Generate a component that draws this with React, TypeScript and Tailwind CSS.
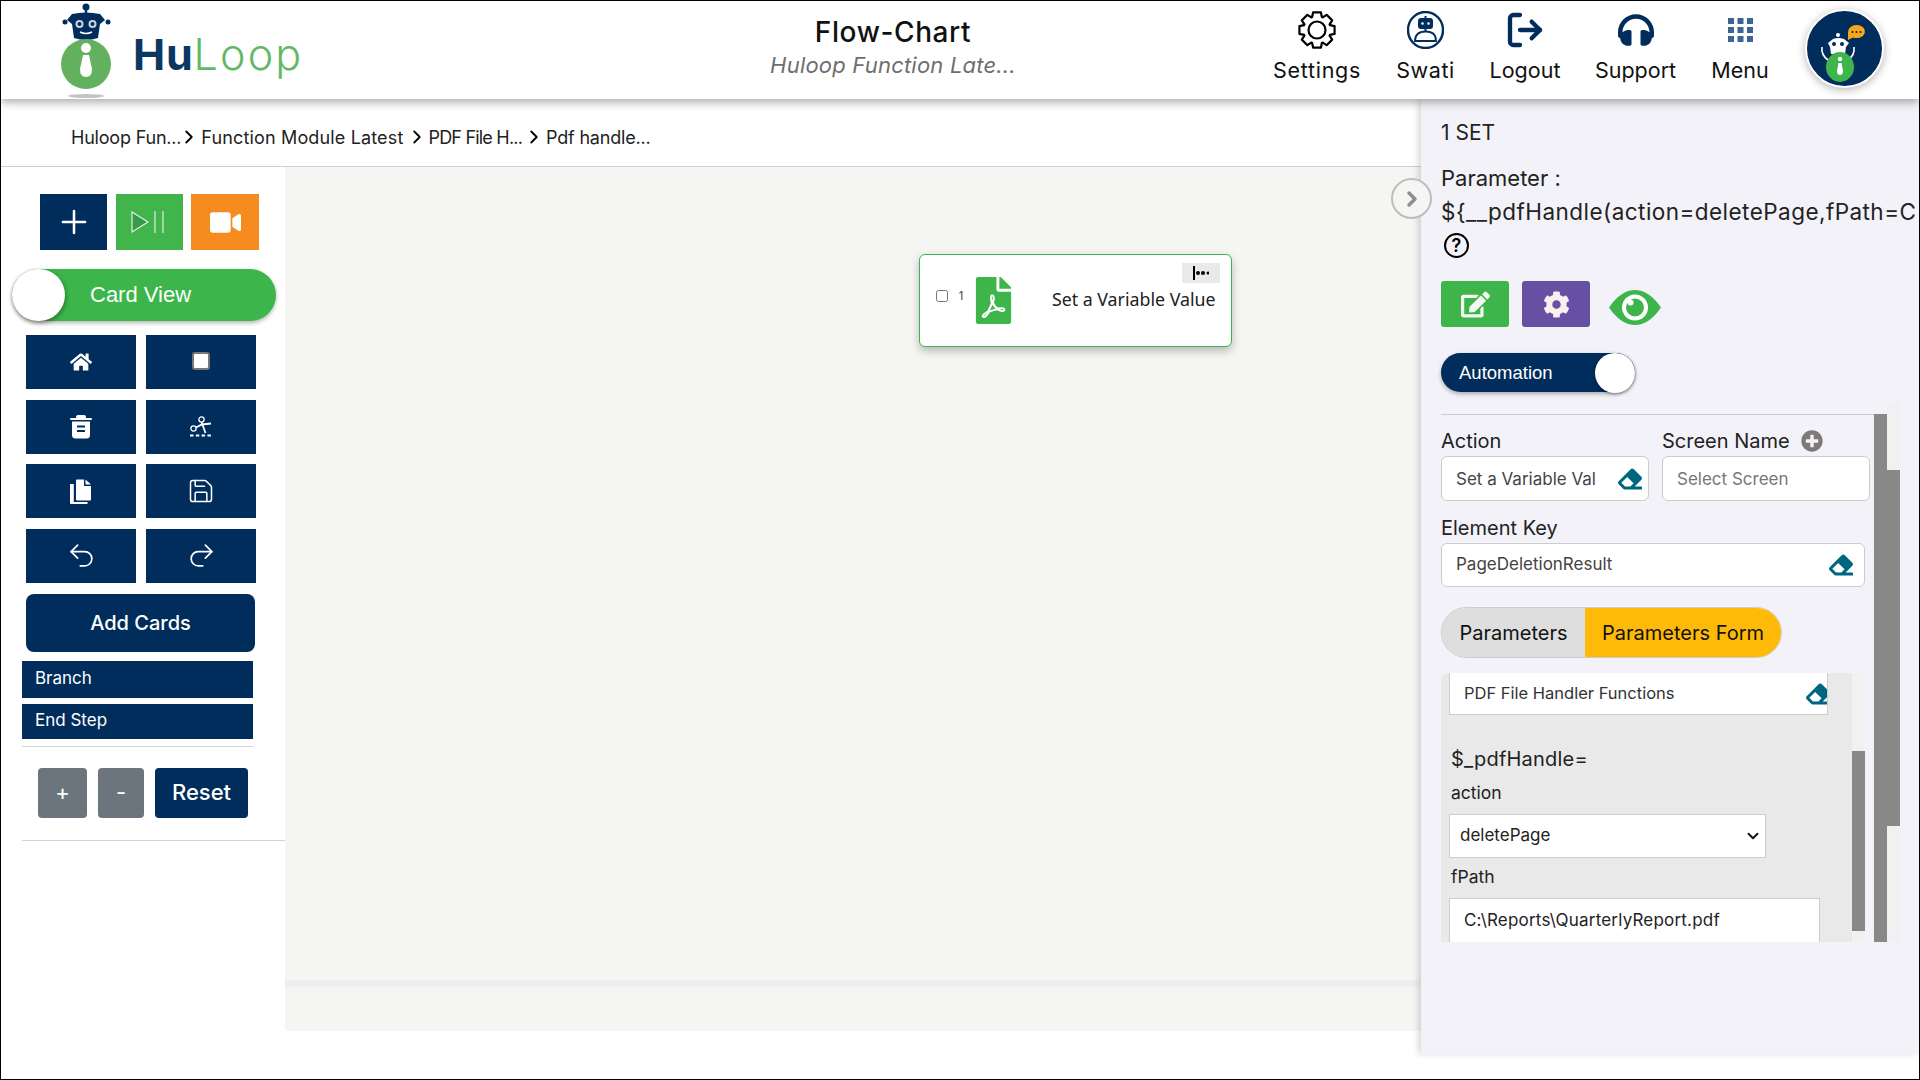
import { ChevronDown, ChevronRight, LogOut, Plus, Redo2, Save, Undo2 } from 'lucide-react';
import { FaCog, FaEdit, FaEraser, FaFilePdf, FaHeadphones, FaHome, FaPlusCircle, FaVideo } from 'react-icons/fa';

const NAVY = 'bg-[#012d5c]';

const LogoMark = () => (
    <svg width="60" height="98" viewBox="56 0 60 98">
        <circle cx="86" cy="5" r="3.5" fill="#012d5c" />
        <rect x="84.8" y="6" width="2.4" height="8" fill="#012d5c" />
        <path d="M67 18 L72 12 Q86 9 100 12 L105 18 L100 22 L98 36 Q86 40 74 36 L72 22 Z" fill="#012d5c" />
        <circle cx="65" cy="20" r="2.5" fill="#012d5c" />
        <circle cx="108" cy="20" r="2.5" fill="#012d5c" />
        <circle cx="79.5" cy="22" r="4" fill="#c9d3de" />
        <circle cx="92.5" cy="22" r="4" fill="#c9d3de" />
        <circle cx="79.5" cy="22" r="2" fill="#012d5c" />
        <circle cx="92.5" cy="22" r="2" fill="#012d5c" />
        <path d="M80 30 Q86 33 92 30" stroke="#fff" strokeWidth="1.5" fill="none" />
        <circle cx="86" cy="62" r="25" fill="#63b15f" />
        <circle cx="86" cy="46" r="5" fill="#fff" />
        <path d="M83 53 H89 L92 67 Q92 75 86 75 Q80 75 80 67 Z" fill="#fff" />
        <ellipse cx="86" cy="94" rx="18" ry="2" fill="#c4c4c4" />
    </svg>
);

// 8 teeth, outline only
const gearPath = () => {
    const pts: string[] = [];
    for (let i = 0; i < 8; i++) {
        const a = (i * Math.PI) / 4 - Math.PI / 2;
        const step = [
            [-0.36, 13.8],
            [-0.22, 18],
            [0.22, 18],
            [0.36, 13.8],
        ];
        step.forEach(([d, r]) => {
            pts.push(`${(19 + r * Math.cos(a + d)).toFixed(2)} ${(19 + r * Math.sin(a + d)).toFixed(2)}`);
        });
    }
    return `M${pts.join(' L')} Z`;
};

const GearIcon = () => (
    <svg width="38" height="38" viewBox="0 0 38 38" fill="none" stroke="#000" strokeWidth="2.2" strokeLinejoin="round">
        <path d={gearPath()} />
        <circle cx="19" cy="19" r="8.5" />
    </svg>
);

const SwatiIcon = () => (
    <svg width="37" height="38" viewBox="0 0 37 38" fill="none" stroke="#012d5c" strokeWidth="2">
        <ellipse cx="18.5" cy="19" rx="17.5" ry="18" strokeWidth="2.4" />
        <path d="M18.5 5 V8" />
        <rect x="12" y="8" width="13" height="9" rx="2" fill="#012d5c" />
        <circle cx="15.5" cy="12.5" r="1.3" fill="#fff" stroke="none" />
        <circle cx="21.5" cy="12.5" r="1.3" fill="#fff" stroke="none" />
        <path d="M18.5 17 V20" />
        <path d="M8 30 Q8 20.5 18.5 20.5 Q29 20.5 29 30 Z" strokeWidth="1.8" />
    </svg>
);

const MenuIcon = () => (
    <svg width="25" height="24" viewBox="0 0 25 24" fill="#3b6596">
        {[0, 9.5, 19].map((x) =>
            [0, 9, 18].map((y) => <rect key={`${x}-${y}`} x={x} y={y} width="6" height="6" />),
        )}
    </svg>
);

const AvatarArt = () => (
    <svg width="79" height="78" viewBox="3 2 79 78">
        <path d="M44 23 a8.5 6.5 0 1 1 5 5.5 L44 31 Z" fill="#f8a51b" />
        <circle cx="48.5" cy="23" r="1.1" fill="#012d5c" />
        <circle cx="52.5" cy="23" r="1.1" fill="#012d5c" />
        <circle cx="56.5" cy="23" r="1.1" fill="#012d5c" />
        <circle cx="34" cy="26" r="2" fill="#fff" />
        <path d="M24 34 L29 30 Q34 28 40 30 L45 34 L42 38 L41 45 H27 L26 38 Z" fill="#fff" />
        <circle cx="30" cy="35" r="2" fill="#012d5c" />
        <circle cx="38" cy="35" r="2" fill="#012d5c" />
        <path d="M18 38 Q17 46 24 51 M50 38 Q51 46 44 51" stroke="#fff" strokeWidth="1.6" fill="none" />
        <ellipse cx="36" cy="58" rx="14" ry="15" fill="#3db54a" />
        <circle cx="36" cy="50" r="2.2" fill="#fff" />
        <path d="M34.5 54 H37.5 L39 62 Q39 66 36 66 Q33 66 33 62 Z" fill="#fff" />
    </svg>
);

const PlayPauseIcon = () => (
    <svg width="36" height="24" viewBox="0 0 36 24" fill="none" stroke="#e8f5e9" strokeWidth="1.1">
        <path d="M1 2 L17 12 L1 22 Z" fill="#379a47" />
        <path d="M24 1 V23 M32 1 V23" />
    </svg>
);

const TrashIcon = () => (
    <svg width="22" height="24" viewBox="0 0 22 24" fill="#fff">
        <rect x="6" y="0" width="10" height="4" rx="2" />
        <rect x="0" y="3" width="22" height="2" rx="1" />
        <path d="M2 6.5 H20 V20 a3.5 3.5 0 0 1 -3.5 3.5 H5.5 A3.5 3.5 0 0 1 2 20 Z" />
        <rect x="7" y="10.5" width="8" height="2" fill="#012d5c" />
        <rect x="7" y="15" width="8" height="2" fill="#012d5c" />
    </svg>
);

const CutIcon = () => (
    <svg width="24" height="22" viewBox="0 0 24 22" fill="none" stroke="#fff" strokeWidth="1.3">
        <circle cx="12.5" cy="3.5" r="2.6" />
        <circle cx="4.5" cy="12.5" r="2.6" />
        <path d="M12.5 6 L16.5 17 M7 11.5 L13 8.5 L22 7.5" strokeWidth="1.8" />
        <path d="M1 19.5 H23" strokeWidth="1.8" strokeDasharray="3.5 2.3" />
    </svg>
);

const CopyIcon = () => (
    <svg width="22" height="25" viewBox="0 0 22 25" fill="#fff">
        <path d="M6 1.5 a1 1 0 0 1 1-1 H14 V7 H21 V20.5 a1 1 0 0 1 -1 1 H7 a1 1 0 0 1 -1-1 Z" />
        <path d="M15.5 0.5 L21 5.5 H15.5 Z" />
        <path d="M0 5 H3.8 V23 H17.5 V25 H1 a1 1 0 0 1 -1-1 Z" />
    </svg>
);

const EyeIcon = () => (
    <svg width="52" height="35" viewBox="0 0 52 35">
        <path d="M0 17.5 Q12 0 26 0 Q40 0 52 17.5 Q40 35 26 35 Q12 35 0 17.5 Z" fill="#3db54a" />
        <circle cx="26" cy="17.5" r="13" fill="#fff" />
        <circle cx="26" cy="17.5" r="9" fill="#3db54a" />
        <circle cx="21.5" cy="12.5" r="3" fill="#fff" />
    </svg>
);

const HelpIcon = () => (
    <div className="ml-[3px] flex h-[25px] w-[25px] items-center justify-center rounded-full border-[2.5px] border-black text-[18px] leading-none font-semibold text-black">
        ?
    </div>
);

const BranchDots = () => (
    <svg width="16" height="14" viewBox="0 0 16 14" fill="#000">
        <rect x="0" y="0" width="2" height="14" />
        <circle cx="5" cy="7" r="2" />
        <circle cx="10" cy="7" r="2" />
        <circle cx="15" cy="7" r="1.5" />
    </svg>
);

const Chevron = () => <ChevronRight size={22} strokeWidth={2} className="mx-[-3px] shrink-0 text-black" />;

const navItems = [
    { label: 'Settings', width: 'w-[86px]', track: 'tracking-[0.7px]', icon: <GearIcon /> },
    { label: 'Swati', width: 'w-[57px]', track: 'tracking-[0.6px]', icon: <SwatiIcon /> },
    { label: 'Logout', width: 'w-[68px]', track: '', icon: <LogOut size={40} strokeWidth={2.6} className="text-[#012d5c] -scale-x-100 rotate-180" /> },
    { label: 'Support', width: 'w-[79px]', track: '', icon: <FaHeadphones size={36} className="text-[#012d5c]" /> },
    { label: 'Menu', width: 'w-[56px]', track: '', icon: <MenuIcon /> },
];

const Header = () => (
    <header className="relative z-20 flex h-[98px] shrink-0 bg-white shadow-[0_3px_9px_rgba(0,0,0,0.35)]">
        <div className="flex w-[742px] pl-[55px] pt-px">
            <LogoMark />
            <div className="ml-[17px] mt-[24px] h-[56px] text-[43px] leading-[56px] whitespace-nowrap">
                <span className="font-bold tracking-[0.8px] text-[#0d3763]">Hu</span>
                <span className="font-light tracking-[2.2px] text-[#63b866]">Loop</span>
            </div>
        </div>
        <div className="w-[300px] pt-[13px] text-center">
            <div className="text-[28px] leading-[36px] font-medium tracking-[0.6px] text-[#111]">Flow-Chart</div>
            <div className="text-[22px] leading-[30px] tracking-[0.2px] text-[#6e6e6e] italic">Huloop Function Late...</div>
        </div>
        <nav className="ml-[231px] flex gap-[37px] pt-[10px]">
            {navItems.map((item) => (
                <div key={item.label} className={`flex flex-col items-center ${item.width}`}>
                    <div className="flex h-[38px] items-center justify-center">{item.icon}</div>
                    <span className={`mt-[6px] text-[21.5px] leading-[30px] whitespace-nowrap text-[#111] ${item.track}`}>{item.label}</span>
                </div>
            ))}
        </nav>
        <div className="ml-[37px] mt-[8px] h-[79px] w-[79px] overflow-hidden rounded-full border-2 border-white bg-[#012d5c] shadow-[0_2px_8px_rgba(0,0,0,0.3)]">
            <AvatarArt />
        </div>
    </header>
);

const Breadcrumb = () => (
    <div className="flex h-[68px] shrink-0 items-center border-b border-[#cfcfcf] pl-[70px] pt-[9px] text-[18px] whitespace-nowrap text-[#222]">
        <span className="tracking-[-0.2px]">Huloop Fun...</span>
        <Chevron />
        <span className="ml-[4px] tracking-[0.15px]">Function Module Latest</span>
        <span className="ml-[6px]"><Chevron /></span>
        <span className="ml-[3px] tracking-[-0.8px]">PDF File H...</span>
        <span className="ml-[4px]"><Chevron /></span>
        <span className="ml-[4px] tracking-[-0.2px]">Pdf handle...</span>
    </div>
);

const ToolButton = ({ children }: { children: React.ReactNode }) => (
    <div className={`flex h-[54px] items-center justify-center ${NAVY}`}>{children}</div>
);

const Sidebar = () => (
    <aside className="w-[284px] shrink-0 bg-white pt-[27px]">
        <div className="ml-[39px] flex gap-[8.5px]">
            <div className={`flex h-[56px] w-[67px] items-center justify-center text-white ${NAVY}`}>
                <Plus size={38} strokeWidth={1.6} />
            </div>
            <div className="flex h-[56px] w-[67px] items-center justify-center bg-[#41b54c]">
                <PlayPauseIcon />
            </div>
            <div className="flex h-[56px] w-[68px] items-center justify-center bg-[#f68b1f] text-white">
                <FaVideo size={31} />
            </div>
        </div>
        <div className="relative ml-[11px] mt-[19px] flex h-[52px] w-[264px] items-center rounded-full bg-[#3cb54a] shadow-[0_2px_4px_rgba(0,0,0,0.3)]">
            <div className="h-[52px] w-[53px] rounded-full bg-white shadow-[1px_2px_4px_rgba(0,0,0,0.35)]" />
            <span className="mb-[2px] ml-[25px] text-[22px] text-white [font-family:'Liberation_Sans',sans-serif]">Card View</span>
        </div>
        <div className="ml-[25px] mt-[14px] grid w-[230px] grid-cols-2 gap-x-[10px] gap-y-[10.5px]">
            <ToolButton><FaHome size={22} className="text-white" /></ToolButton>
            <ToolButton><div className="mb-[3px] h-[18px] w-[18px] rounded-[3px] border-2 border-[#777] bg-white" /></ToolButton>
            <ToolButton><TrashIcon /></ToolButton>
            <ToolButton><CutIcon /></ToolButton>
            <ToolButton><CopyIcon /></ToolButton>
            <ToolButton><Save size={28} strokeWidth={1.3} className="text-white" /></ToolButton>
            <ToolButton><Undo2 size={31} strokeWidth={1.3} className="text-white" /></ToolButton>
            <ToolButton><Redo2 size={31} strokeWidth={1.3} className="text-white" /></ToolButton>
        </div>
        <div className={`ml-[25px] mt-[11.5px] flex h-[57.5px] w-[229px] items-center justify-center rounded-lg text-[20px] font-medium text-white ${NAVY}`}>
            Add Cards
        </div>
        <div className={`ml-[21px] mt-[9px] flex h-[37px] w-[231px] items-center pl-[13px] text-[17px] text-white ${NAVY}`}>Branch</div>
        <div className={`ml-[21px] mt-[6px] flex h-[35px] w-[231px] items-center pl-[13px] text-[17px] text-white ${NAVY}`}>End Step</div>
        <div className="ml-[21px] mt-[7px] w-[231px] border-t border-[#d4d4d4]" />
        <div className="ml-[37px] mt-[21px] flex h-[50px] gap-[11px] text-white">
            <div className="flex w-[49px] items-center justify-center rounded bg-[#6c757d] text-[22px]">+</div>
            <div className="flex w-[46px] items-center justify-center rounded bg-[#6c757d] text-[22px]">-</div>
            <div className={`flex w-[93px] items-center justify-center rounded text-[22px] font-medium ${NAVY}`}>Reset</div>
        </div>
        <div className="ml-[21px] mt-[22px] w-[263px] border-t border-[#d4d4d4]" />
    </aside>
);

const Canvas = () => (
    <main className="relative flex h-[864px] flex-1 flex-col bg-[#f5f5f3]">
        <div className="h-[813px]" />
        <div className="h-[7px] bg-[#eeeeee]" />
        <div className="absolute left-[634px] top-[87px] flex h-[93px] w-[313px] items-center rounded-md border border-[#3db54a] bg-white pl-[16px] shadow-[0_4px_8px_rgba(0,0,0,0.25)] [font-family:'Noto_Sans',sans-serif]">
            <input type="checkbox" readOnly className="mb-[10px] h-[12px] w-[12px]" />
            <span className="mb-[10px] ml-[10px] text-[12px] text-[#444]">1</span>
            <FaFilePdf size={47} className="ml-[5px] text-[#3db54a]" />
            <span className="mb-[2px] ml-[35px] text-[17.8px] whitespace-nowrap text-[#222]">Set a Variable Value</span>
            <div className="absolute right-[11px] top-[8px] flex h-[20px] w-[38px] items-center justify-center bg-[#e9e9e9]">
                <BranchDots />
            </div>
        </div>
    </main>
);

const ClearableField = ({ value, className }: { value: string; className: string }) => (
    <div className={`flex items-center justify-between rounded-md border border-[#ccc] bg-white pl-[14px] text-[17px] text-[#444] ${className}`}>
        <span className="whitespace-nowrap">{value}</span>
        <FaEraser size={24} className="text-[#006680]" />
    </div>
);

const FormPanel = () => (
    <div className="mt-[15px] flex h-[269px] w-[424px] overflow-hidden rounded-t-md bg-[#e9e9e9]">
        <div className="w-[411px] pl-[8px]">
            <div className="flex h-[42px] w-[379px] items-center justify-between overflow-hidden border-x border-b border-[#ccc] bg-white pl-[14px] text-[16.5px] text-[#333]">
                <span>PDF File Handler Functions</span>
                <FaEraser size={24} className="mr-[-3px] text-[#006680]" />
            </div>
            <div className="mt-[29px] pl-[2px] text-[20px] leading-[30px] tracking-[0.2px] text-[#222]">$_pdfHandle=</div>
            <div className="mt-[6px] pl-[2px] text-[17.5px] leading-[26px] text-[#222]">action</div>
            <div className="relative mt-[8px] h-[44px] w-[317px]">
                <select defaultValue="deletePage" className="h-[44px] w-full appearance-none border border-[#ccc] bg-white px-[10px] text-[17px] text-[#222]">
                    <option value="deletePage">deletePage</option>
                </select>
                <ChevronDown size={18} strokeWidth={2.6} className="absolute right-[4px] top-[13px] text-[#111]" />
            </div>
            <div className="mt-[6px] pl-[2px] text-[17.5px] leading-[26px] text-[#222]">fPath</div>
            <div className="mt-[8px] h-[60px] w-[371px] border border-[#ccc] bg-white pl-[14px] pt-[9px] text-[17px] tracking-[0.2px] text-[#222]">
                C:\Reports\QuarterlyReport.pdf
            </div>
        </div>
        <div className="w-[13px] bg-[#f1f1f1] pt-[78px]">
            <div className="h-[180px] bg-[#888]" />
        </div>
    </div>
);

const PropertiesPanel = () => (
    <section className="relative z-10 h-[955px] w-[498px] shrink-0 bg-[#f2f2f8] pl-[20px] pt-[19px] shadow-[-3px_0_6px_rgba(0,0,0,0.15)]">
        <div className="absolute left-[-30px] top-[79px] flex h-[41px] w-[41px] items-center justify-center rounded-full border-2 border-[#bdbdbd] bg-[#f5f5f3]">
            <ChevronRight size={24} strokeWidth={3.5} className="text-[#8f8f8f]" />
        </div>
        <div className="text-[21px] leading-[30px] text-[#222]">1 SET</div>
        <div className="mt-[15px] text-[22px] leading-[30px] text-[#222]">Parameter :</div>
        <div className="mt-[2px] text-[22.5px] leading-[34px] tracking-[0.45px] whitespace-nowrap text-[#222]">
            {'${__pdfHandle(action=deletePage,fPath=C'}
        </div>
        <div className="mt-[4px]"><HelpIcon /></div>
        <div className="mt-[23px] flex h-[46px] items-center gap-[13px]">
            <div className="flex h-[46px] w-[68px] items-center justify-center rounded-[3px] bg-[#3db54a] text-[#f3f8f0]">
                <FaEdit size={29} />
            </div>
            <div className="flex h-[46px] w-[68px] items-center justify-center rounded-[3px] bg-[#6750a4] text-[#fdeff0]">
                <FaCog size={27} />
            </div>
            <div className="ml-[6px] mt-[6px]"><EyeIcon /></div>
        </div>
        <div className="mt-[26px] flex h-[39px] w-[194px] items-center justify-between rounded-full bg-[#012d5c] pl-[18px] shadow-[0_2px_4px_rgba(0,0,0,0.3)]">
            <span className="text-[18.5px] font-medium text-white [font-family:'Liberation_Sans',sans-serif]">Automation</span>
            <div className="h-[40px] w-[40px] rounded-full bg-white shadow-[0_1px_3px_rgba(0,0,0,0.4)]" />
        </div>
        <div className="mt-[22px] w-[442px] border-t border-[#ccc]" />

        <div className="grid w-[429px] grid-cols-[208px_208px] gap-x-[13px] gap-y-px pt-[12px] text-[20px] leading-[28px] text-[#222]">
            <div>Action</div>
            <div className="flex items-center">
                Screen Name
                <FaPlusCircle size={22} className="ml-[11px] text-[#7f7a7a]" />
            </div>
            <ClearableField value="Set a Variable Val" className="h-[45px] pr-[6px]" />
            <div className="flex h-[45px] items-center rounded-md border border-[#ccc] bg-white pl-[14px] text-[17px] text-[#777]">
                Select Screen
            </div>
        </div>
        <div className="mt-[13px] text-[20px] leading-[28px] text-[#222]">Element Key</div>
        <div className="mt-px flex">
            <ClearableField value="PageDeletionResult" className="h-[44px] w-[424px] pr-[11px]" />
        </div>
        <div className="mt-[20px] flex h-[51px] w-[341px] overflow-hidden rounded-full border border-[#ccc] text-[20px] text-[#111]">
            <div className="flex w-[143px] items-center justify-center bg-[#dedede]">Parameters</div>
            <div className="flex flex-1 items-center justify-center bg-[#ffb907]">Parameters Form</div>
        </div>
        <FormPanel />

        <div className="absolute left-[453px] top-[315px] h-[528px] w-[13px] bg-[#888]" />
        <div className="absolute left-[466px] top-[303px] h-[540px] w-[13px] bg-[#f1f1f1]">
            <div className="mt-[68px] h-[356px] bg-[#888]" />
        </div>
    </section>
);

export default function App() {
    return (
        <div className="flex h-[1080px] w-[1920px] flex-col overflow-hidden border border-black bg-white [font-family:Inter,sans-serif]">
            <Header />
            <div className="flex flex-1">
                <div className="flex w-[1420px] shrink-0 flex-col">
                    <Breadcrumb />
                    <div className="flex">
                        <Sidebar />
                        <Canvas />
                    </div>
                </div>
                <PropertiesPanel />
            </div>
        </div>
    );
}
